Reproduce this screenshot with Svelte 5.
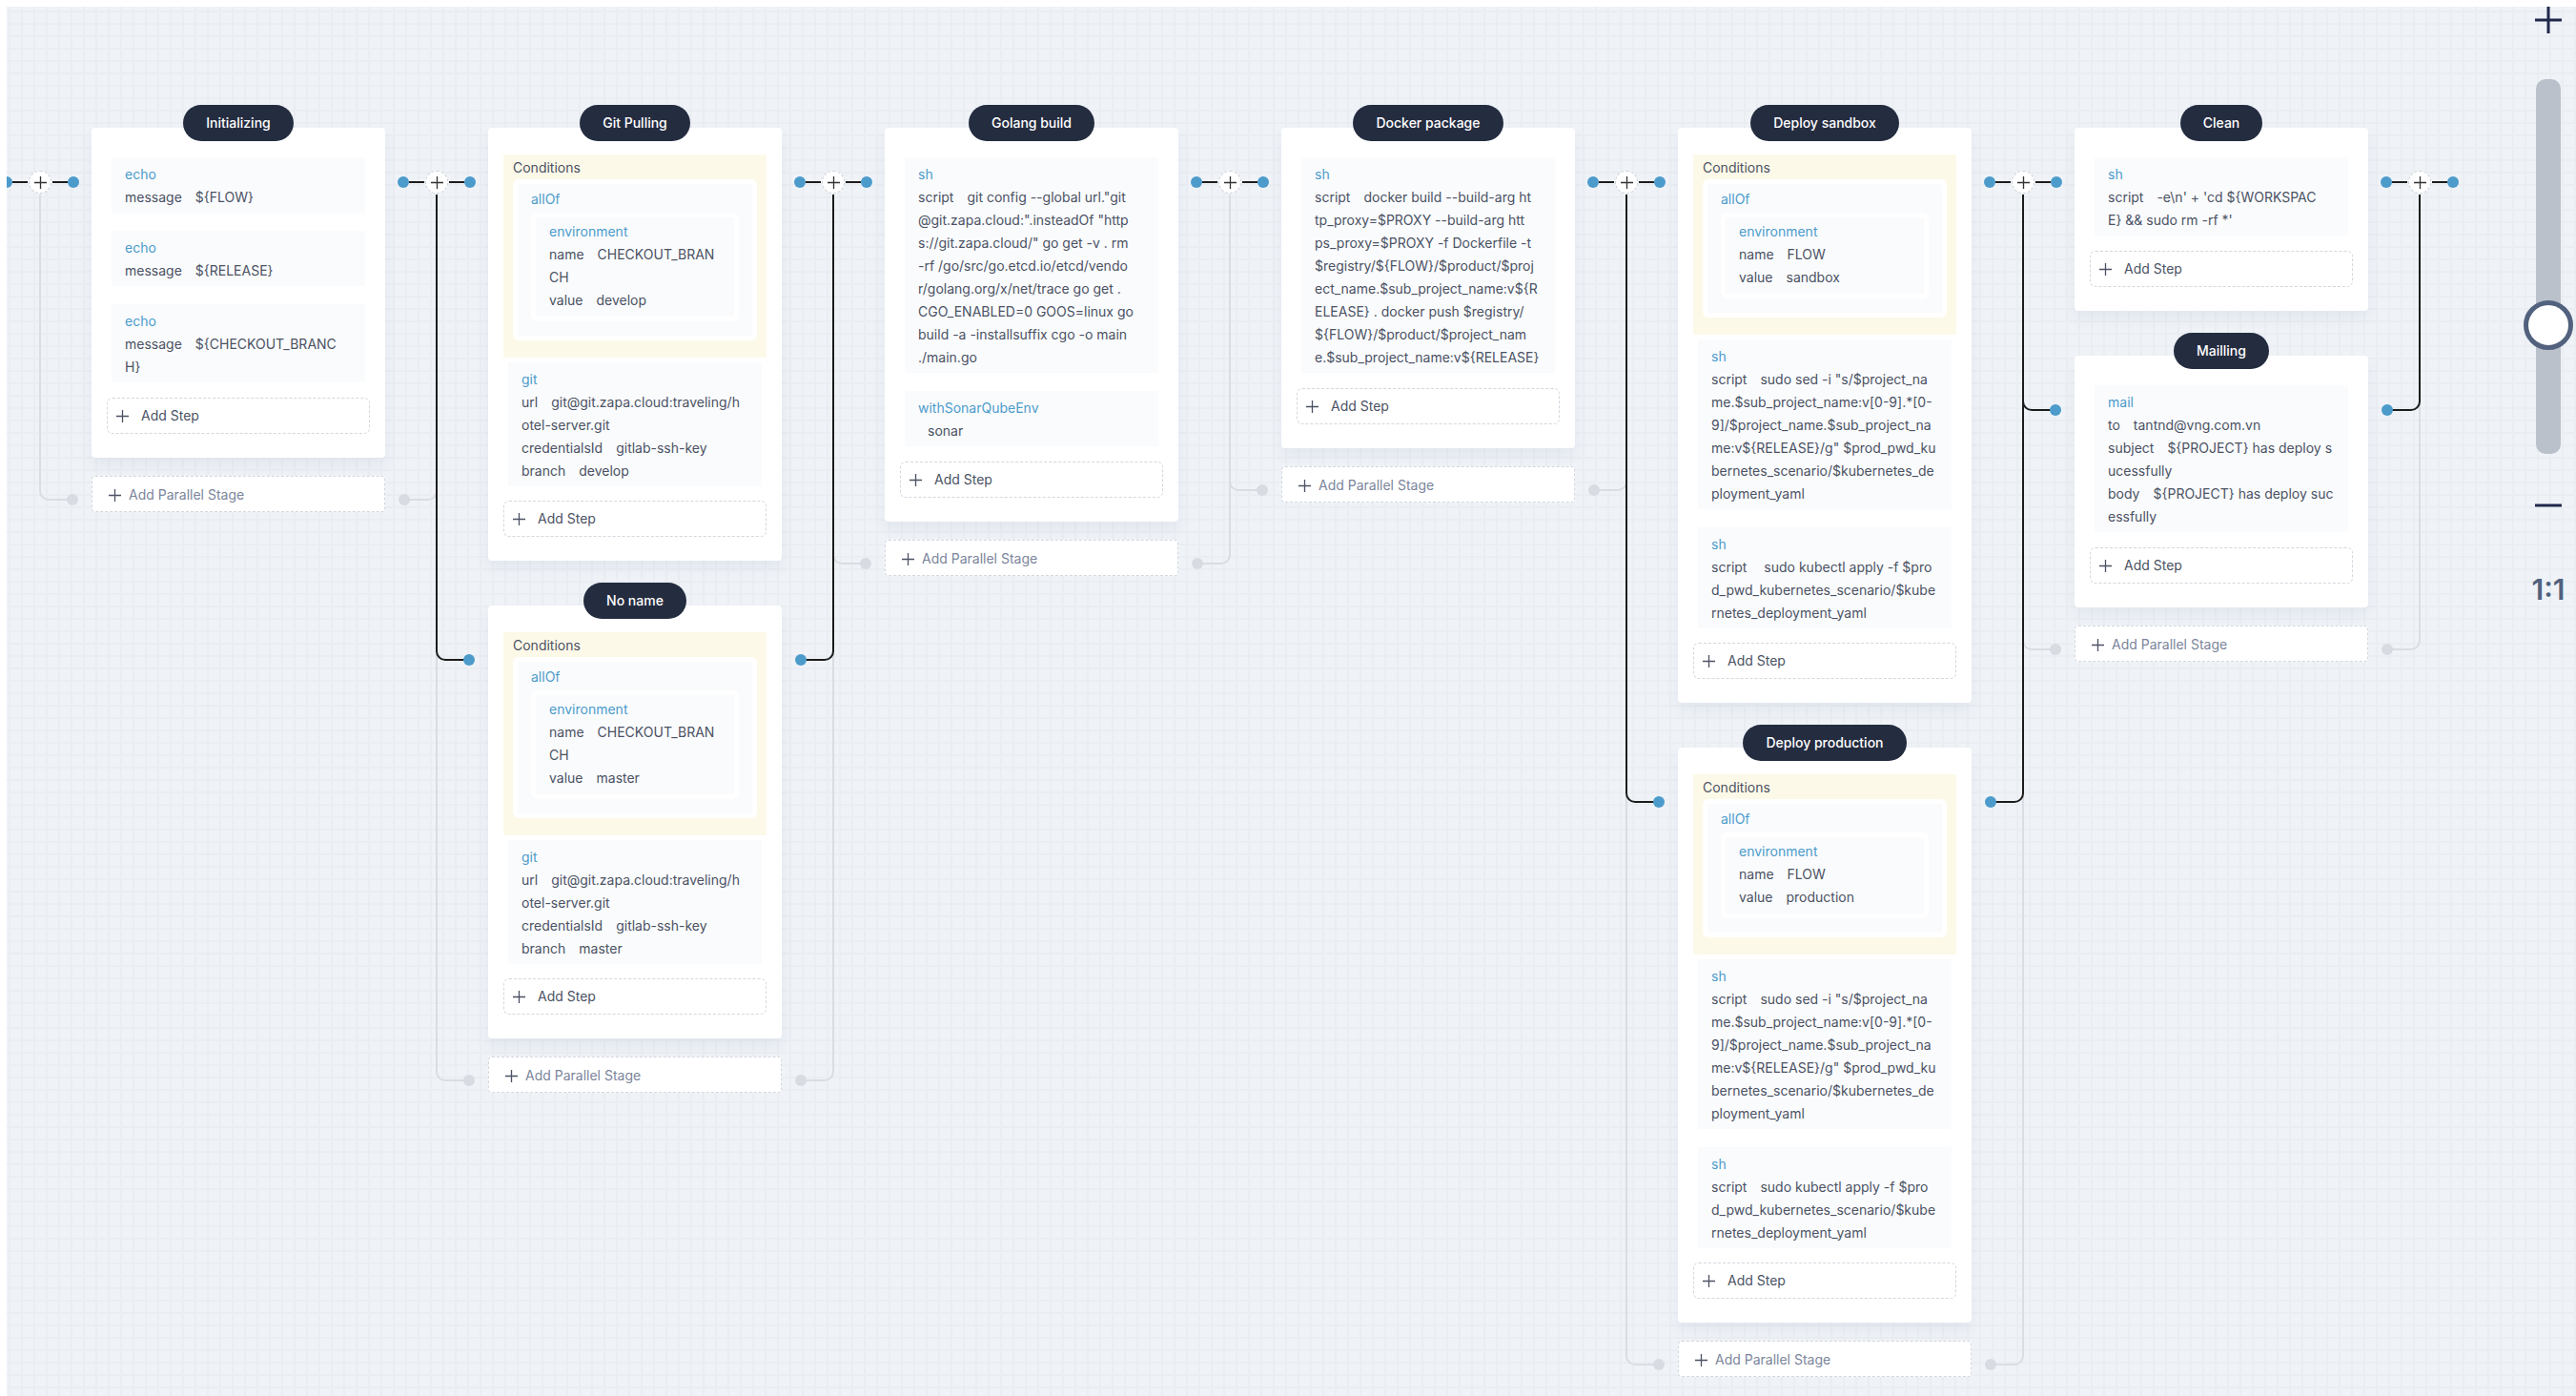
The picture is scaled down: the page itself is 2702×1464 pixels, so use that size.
<script>
  let zoom = $state(32);

  const sed =
    'sudo sed -i "s/$project_na\nme.$sub_project_name:v[0-9].*[0-\n9]/$project_name.$sub_project_na\nme:v${RELEASE}/g" $prod_pwd_ku\nbernetes_scenario/$kubernetes_de\nployment_yaml';
  const apply =
    'sudo kubectl apply -f $pro\nd_pwd_kubernetes_scenario/$kube\nrnetes_deployment_yaml';

  const gitStep = (branch) => ({
    name: 'git',
    params: [
      ['url', 'git@git.zapa.cloud:traveling/h\notel-server.git'],
      ['credentialsId', 'gitlab-ssh-key'],
      ['branch', branch]
    ]
  });

  const columns = [
    [
      {
        title: 'Initializing',
        steps: [
          { name: 'echo', params: [['message', '${FLOW}']] },
          { name: 'echo', params: [['message', '${RELEASE}']] },
          { name: 'echo', params: [['message', '${CHECKOUT_BRANC\nH}']] }
        ]
      }
    ],
    [
      {
        title: 'Git Pulling',
        conditions: [['name', 'CHECKOUT_BRAN\nCH'], ['value', 'develop']],
        steps: [gitStep('develop')]
      },
      {
        title: 'No name',
        conditions: [['name', 'CHECKOUT_BRAN\nCH'], ['value', 'master']],
        steps: [gitStep('master')]
      }
    ],
    [
      {
        title: 'Golang build',
        steps: [
          {
            name: 'sh',
            params: [
              [
                'script',
                'git config --global url."git\n@git.zapa.cloud:".insteadOf "http\ns://git.zapa.cloud/" go get -v . rm\n-rf /go/src/go.etcd.io/etcd/vendo\nr/golang.org/x/net/trace go get .\nCGO_ENABLED=0 GOOS=linux go\nbuild -a -installsuffix cgo -o main\n./main.go'
              ]
            ]
          },
          { name: 'withSonarQubeEnv', params: [['', 'sonar']] }
        ]
      }
    ],
    [
      {
        title: 'Docker package',
        steps: [
          {
            name: 'sh',
            params: [
              [
                'script',
                'docker build --build-arg ht\ntp_proxy=$PROXY --build-arg htt\nps_proxy=$PROXY -f Dockerfile -t\n$registry/${FLOW}/$product/$proj\nect_name.$sub_project_name:v${R\nELEASE} . docker push $registry/\n${FLOW}/$product/$project_nam\ne.$sub_project_name:v${RELEASE}'
              ]
            ]
          }
        ]
      }
    ],
    [
      {
        title: 'Deploy sandbox',
        conditions: [['name', 'FLOW'], ['value', 'sandbox']],
        steps: [
          { name: 'sh', params: [['script', sed]] },
          { name: 'sh', params: [['script', ' ' + apply]] }
        ]
      },
      {
        title: 'Deploy production',
        conditions: [['name', 'FLOW'], ['value', 'production']],
        steps: [
          { name: 'sh', params: [['script', sed]] },
          { name: 'sh', params: [['script', apply]] }
        ]
      }
    ],
    [
      {
        title: 'Clean',
        steps: [
          {
            name: 'sh',
            params: [['script', "-e\\n' + 'cd ${WORKSPAC\nE} && sudo rm -rf *'"]]
          }
        ]
      },
      {
        title: 'Mailling',
        steps: [
          {
            name: 'mail',
            params: [
              ['to', 'tantnd@vng.com.vn'],
              ['subject', '${PROJECT} has deploy s\nucessfully'],
              ['body', '${PROJECT} has deploy suc\nessfully']
            ]
          }
        ]
      }
    ]
  ];
</script>

{#snippet plus()}
  <svg class="plus" viewBox="0 0 13 13" aria-hidden="true">
    <path d="M6.5 0v13M0 6.5h13" />
  </svg>
{/snippet}

{#snippet connector()}
  <div class="connector">
    <i class="dot"></i><i class="wire"></i>
    <button class="insert" aria-label="Insert stage">{@render plus()}</button>
    <i class="wire"></i><i class="dot"></i>
  </div>
{/snippet}

{#snippet params(list)}
  {#each list as [key, value]}
    {@const [first, ...rest] = value.split('\n')}
    <p class="param">{#if key}<span class="key">{key}</span>{/if}<span class="value">{first}</span>{#each rest as line}<span class="line">{line}</span>{/each}</p>
  {/each}
{/snippet}

<main class="canvas">
  <div class="pipeline">
    {@render connector()}
    {#each columns as stages}
      <div class="column">
        {#each stages as stage, i}
          {@const last = i === stages.length - 1}
          <section class="stage" class:last>
            {#each ['left', 'right'] as side}
              <i class="trunk {side}" class:pale={last} class:top={i === 0}></i>
              {#if i > 0}
                <i class="branch {side}"></i>
                <i class="dot end {side}"></i>
              {/if}
            {/each}
            <div class="card">
              <h2>{stage.title}</h2>
              {#if stage.conditions}
                <div class="conditions">
                  <p>Conditions</p>
                  <div class="all">
                    <h3>allOf</h3>
                    <div class="env">
                      <h3>environment</h3>
                      {@render params(stage.conditions)}
                    </div>
                  </div>
                </div>
              {/if}
              <div class="steps" class:spaced={!stage.conditions}>
                {#each stage.steps as step}
                  <div class="step">
                    <h3>{step.name}</h3>
                    {@render params(step.params)}
                  </div>
                {/each}
              </div>
              <button class="add-step">{@render plus()}Add Step</button>
            </div>
          </section>
        {/each}
        <div class="parallel">
          {#each ['left', 'right'] as side}
            <i class="branch pale {side}"></i>
            <i class="dot pale end {side}"></i>
          {/each}
          <button class="add-parallel">{@render plus()}Add Parallel Stage</button>
        </div>
      </div>
      {@render connector()}
    {/each}
  </div>

  <aside class="zoom">
    <button class="zoom-in" aria-label="Zoom in">
      <svg viewBox="0 0 28 28"><path d="M14 0v28M0 14h28" /></svg>
    </button>
    <input type="range" min="0" max="100" bind:value={zoom} aria-label="Zoom" />
    <button class="zoom-out" aria-label="Zoom out">
      <svg viewBox="0 0 28 28"><path d="M0 14h28" /></svg>
    </button>
    <button class="reset">1:1</button>
  </aside>
</main>

<style>
  :global(body) {
    background: #fff;
  }
  h2, h3, p {
    margin: 0;
    font-size: 14px;
    font-weight: 400;
  }
  button {
    margin: 0;
    padding: 0;
    border: 0;
    background: none;
    font: inherit;
    color: inherit;
    cursor: pointer;
  }
  .canvas {
    position: relative;
    overflow: hidden;
    box-sizing: border-box;
    min-height: calc(100vh - 7px);
    margin: 7px 0 0 7px;
    padding-top: 127px;
    background:
      linear-gradient(90deg, #eaeef3 2px, transparent 2px) 2px 0 / 13px 13px,
      linear-gradient(#eaeef3 2px, transparent 2px) 0 4px / 13px 13px,
      #eff3f8;
    font: 14px/24px Inter, "Liberation Sans", sans-serif;
    color: #4b5263;
  }
  .pipeline {
    display: flex;
    align-items: flex-start;
    margin-left: -19px;
  }

  .connector {
    position: relative;
    z-index: 2;
    flex: none;
    display: flex;
    align-items: center;
    justify-content: center;
    width: 108px;
    height: 24px;
    margin-top: 45px;
  }
  .dot {
    width: 12px;
    height: 12px;
    border-radius: 50%;
    background: #4c9bcb;
  }
  .dot.pale {
    background: #d8dce2;
  }
  .wire {
    width: 16px;
    height: 2px;
    background: #1c1c1c;
  }
  .insert {
    display: grid;
    place-items: center;
    box-sizing: border-box;
    width: 24px;
    height: 24px;
    margin: 0 1px;
    border: 1px dashed #cdd1d8;
    border-radius: 50%;
    background: #fff;
  }
  .insert .plus {
    stroke: #333;
  }
  .plus {
    flex: none;
    width: 13px;
    height: 13px;
    stroke: #4b5263;
    stroke-width: 1.3;
  }

  .column {
    flex: none;
    width: 308px;
  }
  .stage {
    position: relative;
    padding-bottom: 47px;
  }
  .stage.last {
    padding-bottom: 19px;
  }
  .parallel {
    position: relative;
  }

  .trunk {
    position: absolute;
    z-index: 1;
    top: 0;
    bottom: 0;
    width: 2px;
    background: #1c1c1c;
  }
  .trunk.top {
    top: 70px;
  }
  .trunk.pale {
    z-index: 0;
    background: #dadde3;
  }
  .branch {
    position: absolute;
    z-index: 1;
    box-sizing: border-box;
    top: 0;
    width: 34px;
    height: 58px;
    border: 0 solid #1c1c1c;
    border-bottom-width: 2px;
  }
  .branch.pale {
    z-index: 0;
    height: 26px;
    border-color: #dadde3;
  }
  .dot.end {
    position: absolute;
    z-index: 1;
    top: 51px;
  }
  .dot.pale.end {
    top: 19px;
  }
  .trunk.left { left: -55px; }
  .trunk.right { right: -55px; }
  .branch.left {
    left: -55px;
    border-left-width: 2px;
    border-bottom-left-radius: 10px;
  }
  .branch.right {
    right: -55px;
    border-right-width: 2px;
    border-bottom-right-radius: 10px;
  }
  .dot.end.left { left: -26px; }
  .dot.end.right { right: -26px; }

  .card {
    display: flex;
    flex-direction: column;
    padding: 0 16px 25px;
    border-radius: 4px;
    background: #fff;
    box-shadow: 0 8px 14px rgba(70, 90, 120, 0.07);
  }
  h2 {
    z-index: 1;
    align-self: center;
    margin-top: -24px;
    padding: 0 24px;
    border-radius: 20px;
    background: #242c40;
    color: #fff;
    font-weight: 500;
    line-height: 38px;
  }
  h3 {
    color: #4c9bcb;
  }
  .param {
    white-space: pre;
  }
  .key {
    margin-right: 4px;
  }
  .value {
    padding-left: 10px;
  }
  .line {
    display: block;
  }
  .conditions {
    margin-top: 14px;
    padding: 2px 10px 18px;
    background: #fdf9e9;
  }
  .all, .env {
    border: 5px solid #fff;
    border-radius: 6px;
    background: #fafbfd;
  }
  .all {
    padding: 4px 14px 15px;
  }
  .env {
    margin-top: 2px;
    padding: 3px 14px 5px;
  }
  .steps {
    display: grid;
    gap: 19px;
    margin: 5px 5px 15px;
  }
  .steps.spaced {
    margin: 17px 5px 16px;
  }
  .step {
    padding: 6px 14px 4px;
    background: #fafbfd;
  }
  .add-step, .add-parallel {
    display: flex;
    align-items: center;
    box-sizing: border-box;
    width: 100%;
    height: 38px;
    border: 1px dashed #d3d7de;
    border-radius: 6px;
    background: #fff;
  }
  .add-step {
    gap: 13px;
    padding-left: 9px;
  }
  .add-parallel {
    gap: 8px;
    padding: 2px 0 0 17px;
    border-radius: 4px;
    color: #7b859b;
  }

  .zoom {
    position: absolute;
    z-index: 3;
    top: 0;
    right: 0;
    display: flex;
    flex-direction: column;
    align-items: center;
    width: 58px;
    color: #52617d;
  }
  .zoom-in, .zoom-out {
    height: 28px;
  }
  .zoom-in {
    margin-bottom: 48px;
  }
  .zoom svg {
    display: block;
    width: 28px;
    height: 28px;
    stroke: #20284a;
    stroke-width: 3;
  }
  .zoom-out {
    margin: 40px 0 54px;
  }
  input {
    appearance: none;
    writing-mode: vertical-lr;
    direction: rtl;
    width: 26px;
    height: 393px;
    margin: 0;
    border-radius: 10px;
    background: #bac1ca;
  }
  input::-webkit-slider-thumb {
    appearance: none;
    box-sizing: border-box;
    width: 52px;
    height: 52px;
    border: 5px solid #52617d;
    border-radius: 50%;
    background: #fff;
  }
  .reset {
    font-size: 30px;
    font-weight: 600;
    line-height: 40px;
  }
</style>
